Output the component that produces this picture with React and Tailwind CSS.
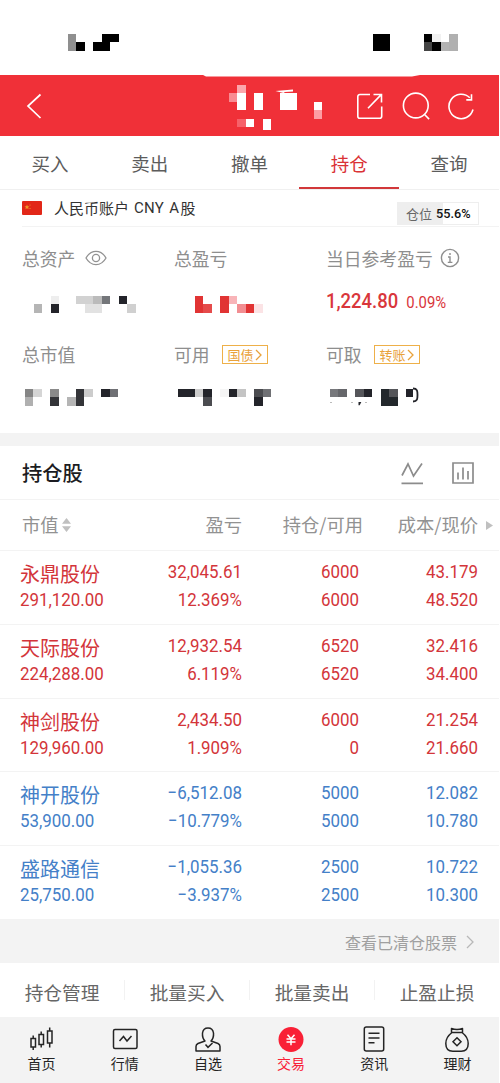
import { Fragment } from "react";

const CELL = 8.47;

const INK = "#23242a";
const RED = "#e13434";

// each entry is [col, row, color, cols, rows]
const STATUS_LEFT = [
  [0, 0, "#8f8f8f", 1, 2], [1, 1, "#000"], [3, 1, "#000", 2], [4, 0, "#000", 2],
];
const STATUS_RIGHT = [
  [0, 0, "#000", 2, 2], [6, 0, "#000"], [7, 0, "#f1f1f1"], [9, 0, "#b0b0b0"],
  [6, 1, "#444"], [7, 1, "#000"], [8, 1, "#b3b3b3"], [9, 1, "#b0b0b0"],
];
const TITLE = [
  [1, 0, "#fca6ac"], [0, 1, "#f98b92"], [1, 1, "#fff", 1, 2], [3, 1, "#fff", 1, 2],
  [6, 1, "#fff", 2, 2], [10, 2, "#fff"], [10, 3, "#fd9da3"],
  [1, 4, "#f6616a"], [2, 4, "#fff"], [4, 4, "#fff", 1, 1.3],
];
const TOTAL_ASSETS = [
  [0, 1, "#b5b5b5"], [2, 0, "#eee"], [2, 1, INK], [5, 0, "#d2d2d2", 2], [7, 0, "#bbb"],
  [8, 0, "#74767a"], [6, 1, "#e2e2e2", 2], [10, 0, INK], [11, 1, "#d0d0d0"],
];
const TOTAL_PROFIT = [
  [0, 0, RED, 1, 2], [1, 1, "#e54b4b"], [3, 0, RED, 1, 2], [4, 0, "#f8b4b8"],
  [5, 1, "#f28e92"], [6, 1, RED], [7, 1, "#fbe3e5"],
];
const MARKET_VALUE = [
  [0, 0, "#858585"], [0, 1, "#b0b0b0"], [1, 0, "#d5d5d5"], [3, 0, "#8a8a8a"], [3, 1, "#333438"],
  [5, 1, "#b5b5b5"], [6, 0, "#333438", 1, 2], [7, 0, "#ccc"], [9, 0, INK], [10, 0, "#6f7074"],
];
const AVAILABLE = [
  [0, 0, INK, 2], [2, 0, "#ccc"], [3, 0, INK], [3, 1, "#4b4c50"], [5, 0, "#f5f5f5"],
  [6, 0, INK], [7, 0, "#c4c4c4"], [9, 0, "#4b4c50"], [9, 1, INK], [10, 0, "#6f7074"],
];
const WITHDRAWABLE = [
  [0, 0, "#77787c"], [1, 0, "#66676b"], [3, 0, "#55565a"], [4, 0, INK],
  [6, 0, "#23282c", 1, 2], [7, 0, "#55565a"], [7, 1, "#23282c"], [9, 0, INK, 0.75],
];

const TABS = ["买入", "卖出", "撤单", "持仓", "查询"];

const STOCKS = [
  { name: "永鼎股份", value: "291,120.00", profit: "32,045.61", rate: "12.369%", held: "6000", usable: "6000", cost: "43.179", price: "48.520", up: true },
  { name: "天际股份", value: "224,288.00", profit: "12,932.54", rate: "6.119%", held: "6520", usable: "6520", cost: "32.416", price: "34.400", up: true },
  { name: "神剑股份", value: "129,960.00", profit: "2,434.50", rate: "1.909%", held: "6000", usable: "0", cost: "21.254", price: "21.660", up: true },
  { name: "神开股份", value: "53,900.00", profit: "−6,512.08", rate: "−10.779%", held: "5000", usable: "5000", cost: "12.082", price: "10.780", up: false },
  { name: "盛路通信", value: "25,750.00", profit: "−1,055.36", rate: "−3.937%", held: "2500", usable: "2500", cost: "10.722", price: "10.300", up: false },
];

const ACTIONS = ["持仓管理", "批量买入", "批量卖出", "止盈止损"];

function Mosaic({ cells, cols, rows = 2, className = "", children }) {
  return (
    <svg
      width={cols * CELL}
      height={rows * CELL}
      className={`block shrink-0 overflow-visible ${className}`}
      shapeRendering="crispEdges"
    >
      {cells.map(([x, y, fill, w = 1, h = 1], i) => (
        <rect key={i} x={x * CELL} y={y * CELL} width={w * CELL} height={h * CELL} fill={fill} />
      ))}
      {children}
    </svg>
  );
}

function Icon({ size = 28, stroke = 1.6, className = "", children }) {
  return (
    <svg
      width={size}
      height={size}
      viewBox="0 0 28 28"
      fill="none"
      stroke="currentColor"
      strokeWidth={stroke}
      className={`block shrink-0 ${className}`}
    >
      {children}
    </svg>
  );
}

function Header() {
  return (
    <header className="h-[61px] bg-[#f03038] text-white">
      <svg width="499" height="2" className="block">
        <path d="M203 0H420L412 1.6H206Z" fill="#fff" />
      </svg>
      <div className="flex h-[57px] items-center">
        <Icon className="ml-5" stroke={1.7}>
          <path d="M20.5 2.5 8 14l12.5 12" />
        </Icon>
        <Mosaic cells={TITLE} cols={11} rows={5} className="ml-[180.7px] mt-[2px]">
          <path d="M46.500 6 64 4.600v1.800l-8 .5-1.500 1Z" fill="#fff" shapeRendering="auto" />
        </Mosaic>
        <Icon className="ml-[34.5px]">
          <path d="M14 2.5H3.8a2 2 0 0 0-2 2v19.7a2 2 0 0 0 2 2h19.900a2 2 0 0 0 2-2V14.5M12 16.2 25.2 2.6M17.5 2.5h8v8" />
        </Icon>
        <Icon className="ml-[18px]">
          <circle cx="13.8" cy="13.5" r="12.4" />
          <path d="m22.3 22.3 4.8 4.8" />
        </Icon>
        <Icon className="ml-[17px]">
          <path d="M22.8 5.8A12.2 12.2 0 1 0 26 17.5M24.5 2.2v5.7h-5.2" />
        </Icon>
      </div>
    </header>
  );
}

function Tabs() {
  return (
    <nav className="grid h-[54px] grid-cols-5 border-b border-[#f0f0f0] text-[18.5px] text-[#5c5c5c]">
      {TABS.map((tab) => (
        <div
          key={tab}
          className={
            tab === "持仓"
              ? "flex items-center justify-center border-b-[2.5px] border-[#d2383a] pt-1 text-[#da3236]"
              : "flex items-center justify-center pt-[2px]"
          }
        >
          {tab}
        </div>
      ))}
    </nav>
  );
}

function Account() {
  return (
    <div className="ml-[22px] flex h-[37px] items-center border-b border-[#f3f3f3]">
      <svg width="20" height="14" className="block">
        <rect width="20" height="14" rx="1" fill="#e22718" />
        <path d="m5 3.6.7 1.7 1.8.1-1.4 1.1.5 1.8L5 7.3 3.4 8.3l.5-1.8-1.4-1.1 1.8-.1Z" fill="#f09a2b" />
        <circle cx="8" cy="4" r=".6" fill="#f09a2b" />
        <circle cx="8" cy="7.5" r=".6" fill="#f09a2b" />
      </svg>
      <span className="ml-3 flex items-center text-[15px] text-[#333]">
        人民币账户
        <span className="mx-[5px] font-[Roboto] text-[15px] tracking-[0.3px]">CNY</span>
        <span className="mr-[1.500px] font-[Roboto] text-[15px]">A</span>
        股
      </span>
      <div className="ml-auto mr-[20px] mt-[11px] flex h-[23px] w-[82px] items-center justify-center gap-[4px] border border-[#eee] bg-linear-to-r from-[#eee] from-56% to-white to-56% text-[13px] text-[#666]">
        仓位
        <span className="w-[34px] origin-left scale-x-94 font-[Roboto] text-[13.500px] font-medium text-[#111]">55.6%</span>
      </div>
    </div>
  );
}

function Label({ children }) {
  return <div className="flex h-5 items-center text-[17.8px] whitespace-nowrap text-[#8e8e8e]">{children}</div>;
}

function Tag({ children }) {
  return (
    <span className="ml-[12px] flex h-[19px] w-[46px] items-center justify-center border-[1.5px] border-[#eeb049] text-[13px] text-[#e9a23b]">
      {children}
      <svg width="7" height="12" className="ml-[1px] block" fill="none" stroke="currentColor" strokeWidth="1.3">
        <path d="m1 1 5 5-5 5" />
      </svg>
    </span>
  );
}

function Summary() {
  return (
    <section className="grid h-[205px] grid-cols-[152px_152px_1fr] grid-rows-[47.5px_49px_44px_1fr] pt-[21px] pl-[22px]">
      <Label>
        总资产
        <svg width="22" height="16" className="ml-[10px] block" fill="none" stroke="#929292" strokeWidth="1.3">
          <path d="M1 8C6-.8 16-.8 21 8 16 16.8 6 16.8 1 8Z" />
          <circle cx="11" cy="8" r="3.6" />
        </svg>
      </Label>
      <Label>总盈亏</Label>
      <Label>
        当日参考盈亏
        <svg width="20" height="20" className="ml-[7px] block" fill="none" stroke="#8e8e8e" strokeWidth="1.4">
          <circle cx="10" cy="10" r="8.6" />
          <path d="M10 5v2M8 9h2v5.4M7.8 14.4h4.6" />
        </svg>
      </Label>

      <Mosaic cells={TOTAL_ASSETS} cols={12} className="ml-[12px]" />
      <Mosaic cells={TOTAL_PROFIT} cols={8} className="ml-[21px]" />
      <div className="-mt-[10px] flex h-6 origin-left scale-x-90 items-baseline font-[Roboto] font-medium whitespace-nowrap text-[#d9363b]">
        <span className="text-[20.5px]">1,224.80</span>
        <span className="ml-[9px] text-[16.5px] font-normal">0.09%</span>
      </div>

      <Label>总市值</Label>
      <Label>
        可用
        <Tag>国债</Tag>
      </Label>
      <Label>
        可取
        <Tag>转账</Tag>
      </Label>

      <Mosaic cells={MARKET_VALUE} cols={11} className="ml-[3px]" />
      <Mosaic cells={AVAILABLE} cols={11} className="ml-[4px]" />
      <Mosaic cells={WITHDRAWABLE} cols={11} className="ml-[4px]">
        <g shapeRendering="auto">
          <path d="M83-.5c4.500 0 4.500 3 4.500 6.500s0 6.500-4.500 6.500" fill="none" stroke={INK} strokeWidth="1.8" />
          <path d="M28.500 13h2.800l-1.600 3.200h-1.200Z" fill={INK} />
          <path d="M0 13.500h2M21 13.500h2M35 13.500h2" stroke="#bbb" />
        </g>
      </Mosaic>
    </section>
  );
}

function HoldingsHead() {
  return (
    <>
      <div className="flex h-[54px] items-center border-b border-[#f3f3f3] pr-[25px] pl-[22px]">
        <h2 className="text-[20.300px] font-medium text-[#1c1c22]">持仓股</h2>
        <svg width="22" height="24" className="ml-auto block" fill="none" stroke="#8c8c8c" strokeWidth="1.7">
          <path d="m1 14.500 6-11.500 5.500 12L21 2.500M.5 22.300H22" />
        </svg>
        <svg width="22" height="22" className="ml-[29px] block" fill="none" stroke="#8c8c8c" strokeWidth="1.7">
          <path d="M1 1h20v20H1zM6 17.500v-7M11 17.500v-12M16 17.500v-8.500" />
        </svg>
      </div>
      <div className="grid h-[51px] grid-cols-[220px_121px_115px_1fr] items-center border-b border-[#f3f3f3] pl-[22px] text-right text-[18.300px] text-[#929292]">
        <div className="flex items-center justify-between">
          <span className="flex items-center">
            市值
            <svg width="9" height="14" className="ml-[3px] block" fill="#c0c0c0">
              <path d="M4.500 0 9 5.800H0ZM4.500 14 9 8.200H0Z" />
            </svg>
          </span>
          <span>盈亏</span>
        </div>
        <span>持仓/可用</span>
        <span>成本/现价</span>
        <svg width="7" height="9" className="ml-2 block" fill="#c0c0c0">
          <path d="m0 0 7 4.500L0 9Z" />
        </svg>
      </div>
    </>
  );
}

function Pair({ top, bottom }) {
  return (
    <div className="flex origin-right scale-x-89 flex-col items-end font-[Roboto] text-[19px] leading-[28px] font-[450]">
      <span>{top}</span>
      <span>{bottom}</span>
    </div>
  );
}

function StockRow({ stock }) {
  return (
    <div
      className={`grid h-[73.8px] grid-cols-[110px_112px_117px_119px] border-b border-[#f3f3f3] pt-[7px] pl-[20px] ${
        stock.up ? "text-[#d3353a]" : "text-[#4480c8]"
      }`}
    >
      <div className="whitespace-nowrap">
        <div className="mt-[2px] h-[26px] text-[20px] leading-[28px]">{stock.name}</div>
        <div className="origin-left scale-x-89 font-[Roboto] text-[19px] leading-[28px] font-[450]">{stock.value}</div>
      </div>
      <Pair top={stock.profit} bottom={stock.rate} />
      <Pair top={stock.held} bottom={stock.usable} />
      <Pair top={stock.cost} bottom={stock.price} />
    </div>
  );
}

function Actions() {
  return (
    <div className="flex h-[54px] items-center text-[18.700px] text-[#666]">
      {ACTIONS.map((action, i) => (
        <Fragment key={action}>
          {i > 0 && <i className="h-5 w-px bg-[#f2f2f2]" />}
          <span className="flex-1 pt-[5px] text-center">{action}</span>
        </Fragment>
      ))}
    </div>
  );
}

const NAV = [
  {
    label: "首页",
    icon: <path d="M3 12.500h4.500v8.500H3zM5.200 9.500v3M5.200 21v3M11 8.500h4.500v10H11zM13.200 5.500v3M13.200 18.500v3M19.500 5h4.500v12h-4.500zM21.700 1.500V5M21.700 17v4.500" />,
  },
  {
    label: "行情",
    icon: (
      <>
        <rect x="2.500" y="3.500" width="23.500" height="19" rx="1.500" />
        <path d="m8.500 15 4-4.500 3.500 4.500 4.500-5" />
      </>
    ),
  },
  {
    label: "自选",
    icon: (
      <>
        <path d="M11 15C8.500 12.500 8.300 9.500 8.500 7 9 3.500 11 2 14 2s5 1.500 5.500 5c.2 2.500 0 5.500-2.500 8l7 2.500c1.500.7 2 1.500 2 3v4.500H2v-4.500c0-1.500.5-2.300 2-3Z" strokeLinejoin="round" />
        <path d="m11.500 18.500 2.500 2.800 4.500-4.300" />
      </>
    ),
  },
  {
    label: "交易",
    active: true,
    icon: (
      <>
        <circle cx="14" cy="13.500" r="12.500" fill="#f92036" stroke="none" />
        <path d="m10.500 8.800 3.500 4 3.500-4M9.500 12.900h9M9.500 16h9M14 12.800v6.400" stroke="#fff" />
      </>
    ),
  },
  {
    label: "资讯",
    icon: (
      <>
        <rect x="4.300" y="1" width="19.400" height="24" rx="2" />
        <path d="M8.500 7.300h11M8.500 12h11M8.500 16.800h6" />
      </>
    ),
  },
  {
    label: "理财",
    icon: (
      <>
        <path d="M8.500 2.500c3 1 8 1 11 0v4h-11ZM9 6.500C5 9.500 2.800 13 2.800 17.500c0 5 2.500 7.700 7 7.700h8.400c4.500 0 7-2.700 7-7.700 0-4.500-2.200-8-6.200-11" strokeLinejoin="round" />
        <path d="m14 11.800 4 4-4 4-4-4Z" />
      </>
    ),
  },
];

function BottomNav() {
  return (
    <nav className="grid h-[66px] grid-cols-6 bg-[#f3f3f3] text-[14px] text-[#242424]">
      {NAV.map(({ label, icon, active }) => (
        <div key={label} className={`flex flex-col items-center pt-[9px] ${active ? "text-[#f92036]" : ""}`}>
          <Icon stroke={1.5}>{icon}</Icon>
          <span className="-mt-px leading-5">{label}</span>
        </div>
      ))}
    </nav>
  );
}

export default function App() {
  return (
    <div className="h-[1083px] w-[500px] overflow-hidden bg-white pr-px font-['Noto_Sans_CJK_SC',sans-serif]">
      <div className="flex h-[75px] items-start pt-[34px]">
        <Mosaic cells={STATUS_LEFT} cols={6} className="ml-[67.800px]" />
        <Mosaic cells={STATUS_RIGHT} cols={10} className="mr-[41.500px] ml-auto" />
      </div>
      <Header />
      <Tabs />
      <Account />
      <Summary />
      <div className="mt-[1px] h-[13px] bg-[#f3f3f3]" />
      <HoldingsHead />
      {STOCKS.map((stock) => (
        <StockRow key={stock.name} stock={stock} />
      ))}
      <div className="flex h-[43px] items-center justify-end bg-[#f3f3f3] pt-px pr-[25px] text-[16px] text-[#a0a0a0]">
        查看已清仓股票
        <svg width="8" height="14" className="ml-[9px] block" fill="none" stroke="#b8b8b8" strokeWidth="1.3">
          <path d="m1 1 6 6-6 6" />
        </svg>
      </div>
      <Actions />
      <BottomNav />
    </div>
  );
}
